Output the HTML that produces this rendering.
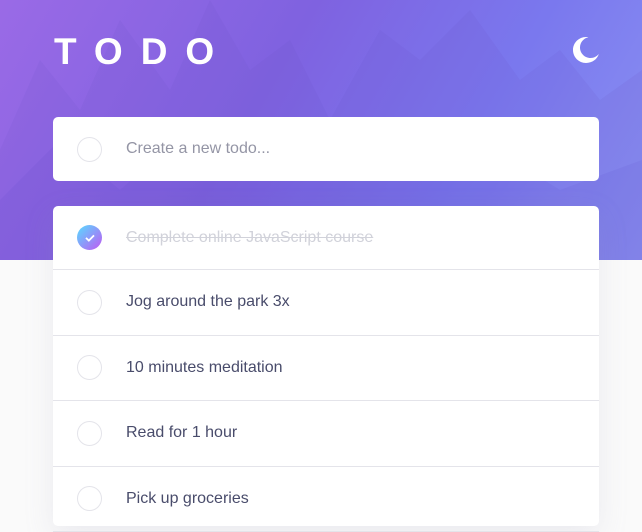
<!DOCTYPE html>
<html><head><style>
*{margin:0;padding:0;box-sizing:border-box}
body{width:642px;height:506px;overflow:hidden;background:#fafafa;font-family:"Liberation Sans",sans-serif;position:relative}
.hdr{position:absolute;left:0;top:0;width:642px;height:260px;background:linear-gradient(120deg,#9a6ae6 0%,#7f62e0 40%,#7a78ee 70%,#8b92f2 100%);overflow:hidden}
.mtn{position:absolute;left:0;top:0}
h1{position:absolute;left:54px;top:32px;color:#fff;font-size:37px;font-weight:bold;letter-spacing:18px;line-height:40px}
.moon{position:absolute;left:573px;top:37px}
.card{position:absolute;left:53px;width:546px;background:#fff;border-radius:5px}
.row{height:65.5px;border-bottom:1px solid #e4e4ea;display:flex;align-items:center;padding-left:24px;font-size:16px;color:#494c6b}
.c{width:25px;height:25px;border-radius:50%;border:1px solid #e4e4ea;margin-right:24px;flex:none}
.done{background:linear-gradient(135deg,#57ddff,#c058f3);border:none;display:flex;align-items:center;justify-content:center}
</style></head><body>
<div class="hdr">
<svg class="mtn" width="642" height="260"><path d="M0 150 L40 60 L80 110 L120 20 L170 90 L210 0 L250 70 L290 40 L330 120 L380 30 L420 60 L470 10 L520 80 L560 50 L600 100 L642 70 L642 260 L0 260Z" fill="#6a4fc8" opacity="0.12"/><path d="M0 200 L60 140 L120 190 L200 120 L260 170 L330 130 L400 180 L480 140 L560 190 L642 160 L642 260 L0 260Z" fill="#5a45c0" opacity="0.1"/></svg>
<h1>TODO</h1>
<svg class="moon" width="26" height="26" viewBox="0 0 26 26"><path fill="#fff" d="M13 0c.81 0 1.603.074 2.373.216C10.593 1.199 7 5.43 7 10.5 7 16.299 11.701 21 17.5 21c3.393 0 6.41-1.61 8.332-4.106C24.375 22.187 19.141 26 13 26 5.820 26 0 20.180 0 13S5.820 0 13 0z"/></svg>
</div>
<div class="card" style="top:117px;height:64px"><div class="row" style="border:none;height:64px;color:#9495a5"><div class="c"></div>Create a new todo...</div></div>
<div class="card" style="top:206px;height:320px;box-shadow:0 10px 30px rgba(150,150,180,.15)">
<div class="row" style="height:64px;color:#d1d2da;text-decoration:line-through"><div class="c done"><svg width="10" height="8" viewBox="0 0 11 9"><path fill="none" stroke="#fff" stroke-width="2" d="M1 4.3l3.2 3.2L10 1.5"/></svg></div>Complete online JavaScript course</div>
<div class="row"><div class="c"></div>Jog around the park 3x</div>
<div class="row"><div class="c"></div>10 minutes meditation</div>
<div class="row"><div class="c"></div>Read for 1 hour</div>
<div class="row"><div class="c"></div>Pick up groceries</div>
</div>
</body></html>
